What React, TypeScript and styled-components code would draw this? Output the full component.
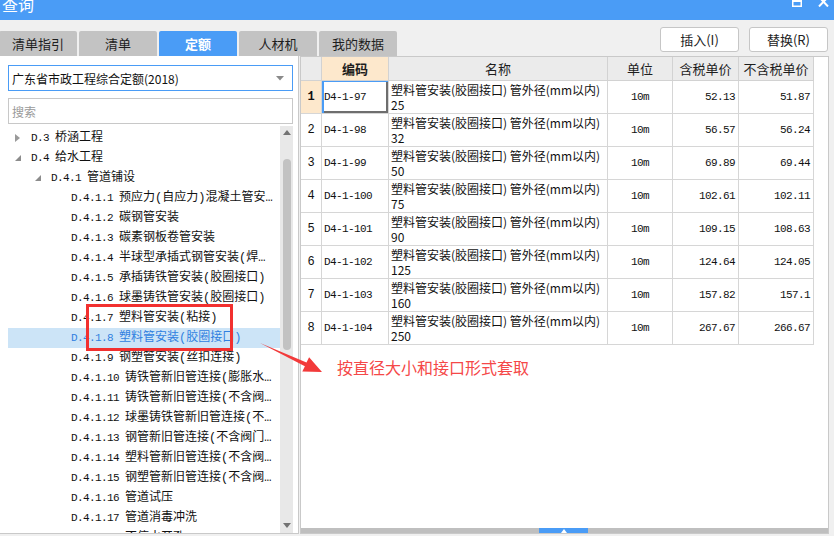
import styled, { createGlobalStyle } from 'styled-components';

const BLUE = '#4a9cf6';
const CJK = '"Noto Sans CJK SC", "Microsoft YaHei", sans-serif';
const MONO = '"Liberation Mono", "Noto Sans CJK SC", monospace';

interface TreeNode {
    code: string;
    name: string;
    level: number;
    toggle?: 'open' | 'closed';
    active?: boolean;
}

const treeNodes: TreeNode[] = [
    { code: 'D.3', name: '桥涵工程', level: 0, toggle: 'closed' },
    { code: 'D.4', name: '给水工程', level: 0, toggle: 'open' },
    { code: 'D.4.1', name: '管道铺设', level: 1, toggle: 'open' },
    { code: 'D.4.1.1', name: '预应力(自应力)混凝土管安装', level: 2 },
    { code: 'D.4.1.2', name: '碳钢管安装', level: 2 },
    { code: 'D.4.1.3', name: '碳素钢板卷管安装', level: 2 },
    { code: 'D.4.1.4', name: '半球型承插式钢管安装(焊接)', level: 2 },
    { code: 'D.4.1.5', name: '承插铸铁管安装(胶圈接口)', level: 2 },
    { code: 'D.4.1.6', name: '球墨铸铁管安装(胶圈接口)', level: 2 },
    { code: 'D.4.1.7', name: '塑料管安装(粘接)', level: 2 },
    { code: 'D.4.1.8', name: '塑料管安装(胶圈接口)', level: 2, active: true },
    { code: 'D.4.1.9', name: '钢塑管安装(丝扣连接)', level: 2 },
    { code: 'D.4.1.10', name: '铸铁管新旧管连接(膨胀水泥接口)', level: 2 },
    { code: 'D.4.1.11', name: '铸铁管新旧管连接(不含阀门)', level: 2 },
    { code: 'D.4.1.12', name: '球墨铸铁管新旧管连接(不含阀门)', level: 2 },
    { code: 'D.4.1.13', name: '钢管新旧管连接(不含阀门安装)', level: 2 },
    { code: 'D.4.1.14', name: '塑料管新旧管连接(不含阀门)', level: 2 },
    { code: 'D.4.1.15', name: '钢塑管新旧管连接(不含阀门)', level: 2 },
    { code: 'D.4.1.16', name: '管道试压', level: 2 },
    { code: 'D.4.1.17', name: '管道消毒冲洗', level: 2 },
    { code: 'D.4.1.18', name: '不停水开孔', level: 2 },
];

interface QuotaRow {
    no: number;
    code: string;
    size: string;
    taxed: string;
    untaxed: string;
}

const quotaRows: QuotaRow[] = [
    { no: 1, code: 'D4-1-97', size: '25', taxed: '52.13', untaxed: '51.87' },
    { no: 2, code: 'D4-1-98', size: '32', taxed: '56.57', untaxed: '56.24' },
    { no: 3, code: 'D4-1-99', size: '50', taxed: '69.89', untaxed: '69.44' },
    { no: 4, code: 'D4-1-100', size: '75', taxed: '102.61', untaxed: '102.11' },
    { no: 5, code: 'D4-1-101', size: '90', taxed: '109.15', untaxed: '108.63' },
    { no: 6, code: 'D4-1-102', size: '125', taxed: '124.64', untaxed: '124.05' },
    { no: 7, code: 'D4-1-103', size: '160', taxed: '157.82', untaxed: '157.1' },
    { no: 8, code: 'D4-1-104', size: '250', taxed: '267.67', untaxed: '266.67' },
];

const tabs = ['清单指引', '清单', '定额', '人材机', '我的数据'];
const ACTIVE_TAB = '定额';

// 표 컬럼 너비 (오른쪽 테두리 포함)
const GRID_COLS = '21px 67px 219px 65px 66px 75px';

function App() {
    return (
        <Page>
            <GlobalStyle />
            <TitleBar>
                <Title>查询</Title>
                <WindowButtons>
                    <svg width="10" height="10" viewBox="0 0 10 10">
                        <rect x="0.75" y="0.75" width="8.5" height="8.5" fill="none" stroke="#fff" strokeWidth="1.5" />
                        <rect x="0" y="0" width="10" height="5" fill="#fff" />
                    </svg>
                    <svg width="11" height="10" viewBox="0 0 11 10">
                        <path d="M1 0 L10 9.5 M10 0 L1 9.5" stroke="#fff" strokeWidth="2" />
                    </svg>
                </WindowButtons>
            </TitleBar>

            <Toolbar>
                <Tabs>
                    {tabs.map((t) => (
                        <Tab key={t} $active={t === ACTIVE_TAB}>
                            {t}
                        </Tab>
                    ))}
                </Tabs>
                <Actions>
                    <ActionButton>插入(I)</ActionButton>
                    <ActionButton>替换(R)</ActionButton>
                </Actions>
            </Toolbar>

            <Body>
                <LeftPanel>
                    <Select>
                        <span>广东省市政工程综合定额(2018)</span>
                        <svg width="8" height="5" viewBox="0 0 8 5">
                            <path d="M0 0 L8 0 L4 4.5 Z" fill="#8a8a8a" />
                        </svg>
                    </Select>
                    <Search placeholder="搜索" />
                    <TreeWrap>
                        <TreeList>
                            {treeNodes.map((n) => (
                                <TreeRow key={n.code} $level={n.level} $active={n.active}>
                                    <Toggle>
                                        {n.toggle === 'closed' && (
                                            <svg width="5" height="8" viewBox="0 0 5 8">
                                                <path d="M0 0 L5 4 L0 8 Z" fill="#9a9a9a" />
                                            </svg>
                                        )}
                                        {n.toggle === 'open' && (
                                            <svg width="6" height="6" viewBox="0 0 6 6">
                                                <path d="M6 0 L6 6 L0 6 Z" fill="#8c8c8c" />
                                            </svg>
                                        )}
                                    </Toggle>
                                    <Label>
                                        <Code>{n.code}</Code>
                                        {n.name}
                                    </Label>
                                </TreeRow>
                            ))}
                        </TreeList>
                        <VScroll>
                            <ScrollArrow>
                                <svg width="8" height="5" viewBox="0 0 8 5">
                                    <path d="M0 5 L8 5 L4 0 Z" fill="#737373" />
                                </svg>
                            </ScrollArrow>
                            <Thumb />
                            <ScrollArrow>
                                <svg width="8" height="5" viewBox="0 0 8 5">
                                    <path d="M0 0 L8 0 L4 5 Z" fill="#737373" />
                                </svg>
                            </ScrollArrow>
                        </VScroll>
                    </TreeWrap>
                </LeftPanel>

                <RightPanel>
                    <TableArea>
                        <HeaderRow>
                            <HeaderCell />
                            <HeaderCell $selected>编码</HeaderCell>
                            <HeaderCell>名称</HeaderCell>
                            <HeaderCell>单位</HeaderCell>
                            <HeaderCell>含税单价</HeaderCell>
                            <HeaderCell>不含税单价</HeaderCell>
                        </HeaderRow>
                        {quotaRows.map((r) => (
                            <DataRow key={r.no}>
                                <NoCell $selected={r.no === 1}>{r.no}</NoCell>
                                <CodeCell $focused={r.no === 1}>{r.code}</CodeCell>
                                <NameCell>
                                    <span>塑料管安装(胶圈接口) 管外径(mm以内)</span>
                                    <span>{r.size}</span>
                                </NameCell>
                                <UnitCell>10m</UnitCell>
                                <PriceCell>{r.taxed}</PriceCell>
                                <PriceCell>{r.untaxed}</PriceCell>
                            </DataRow>
                        ))}
                    </TableArea>
                    <HScroll>
                        <HThumb>
                            <svg width="6" height="4" viewBox="0 0 6 4">
                                <path d="M0 4 L6 4 L3 0 Z" fill="#fff" />
                            </svg>
                        </HThumb>
                    </HScroll>
                </RightPanel>
            </Body>

            {/* 주석(빨간 박스 / 화살표 / 안내 문구) */}
            <MarkBox />
            <MarkArrow width="72" height="40" viewBox="0 0 72 40">
                <path d="M5 5 L51.5 24.6 L54.1 19.2 L67 34 L47.3 33.6 L49.9 28.2 Z" fill="#f23a3a" />
            </MarkArrow>
            <MarkNote>按直径大小和接口形式套取</MarkNote>
        </Page>
    );
}

const GlobalStyle = createGlobalStyle`
    * { box-sizing: border-box; }
    body {
        margin: 0;
        overflow: hidden;
        background: #f0f0f0;
        font-family: ${CJK};
    }
`;

const Page = styled.div`
    position: relative;
    width: 834px;
    height: 536px;
    display: flex;
    flex-direction: column;
    background: #f0f0f0;
    overflow: hidden;
    font-family: ${CJK};
    color: #111;
`;

const TitleBar = styled.div`
    height: 20px;
    flex: none;
    display: flex;
    justify-content: space-between;
    align-items: flex-start;
    padding: 0 5px 0 2px;
    background: ${BLUE};
    color: #fff;
    overflow: hidden;
`;

const Title = styled.span`
    font-size: 16px;
    line-height: 16px;
    margin-top: -4px;
`;

const WindowButtons = styled.div`
    display: flex;
    align-items: flex-start;
    gap: 16px;
    margin-top: -3px;
`;

const Toolbar = styled.div`
    height: 36px;
    flex: none;
    display: flex;
    justify-content: space-between;
`;

const Tabs = styled.div`
    display: flex;
    gap: 2px;
    align-self: flex-end;
    margin-left: -1px;
`;

const Tab = styled.div<{ $active?: boolean }>`
    width: 78px;
    height: 25px;
    display: flex;
    align-items: center;
    justify-content: center;
    border-radius: 2px 2px 0 0;
    background: ${({ $active }) => ($active ? BLUE : '#c3c3c3')};
    color: ${({ $active }) => ($active ? '#fff' : '#1e1e1e')};
    font-size: 13px;
    font-weight: ${({ $active }) => ($active ? 700 : 400)};
`;

const Actions = styled.div`
    display: flex;
    align-items: flex-start;
    gap: 10px;
    padding: 7px 6px 0 0;
`;

const ActionButton = styled.button`
    width: 79px;
    height: 25px;
    padding: 0;
    background: #fff;
    border: 1px solid #c6c6c6;
    border-radius: 3px;
    font-family: ${CJK};
    font-size: 13px;
    color: #222;
`;

const Body = styled.div`
    height: 478px;
    flex: none;
    display: flex;
    gap: 1px;
`;

const LeftPanel = styled.div`
    width: 299px;
    display: flex;
    flex-direction: column;
    background: #fff;
    border-right: 1px solid #c9c9c9;
    border-bottom: 1px solid #c9c9c9;
`;

const Select = styled.div`
    width: 285px;
    height: 26px;
    margin: 9px 0 0 8px;
    display: flex;
    align-items: center;
    justify-content: space-between;
    padding: 0 8px 0 3px;
    border: 1px solid ${BLUE};
    font-size: 12px;
    color: #111;
`;

const Search = styled.input`
    width: 285px;
    height: 26px;
    margin: 7px 0 0 8px;
    padding: 0 3px;
    border: 1px solid #c8c8c8;
    outline: none;
    font-family: ${CJK};
    font-size: 12px;

    &::placeholder {
        color: #9a9a9a;
    }
`;

const TreeWrap = styled.div`
    flex: 1;
    min-height: 0;
    display: flex;
    margin-top: 2px;
    padding-left: 8px;
    overflow: hidden;
`;

const TreeList = styled.div`
    width: 272px;
    padding-top: 2px;
    overflow: hidden;
`;

const TreeRow = styled.div<{ $level: number; $active?: boolean }>`
    height: 20px;
    display: flex;
    align-items: center;
    padding-left: ${({ $level }) => 7 + $level * 20}px;
    padding-right: 5px;
    background: ${({ $active }) => ($active ? '#cce4f7' : 'transparent')};
    color: ${({ $active }) => ($active ? '#2f7fe0' : '#111')};
`;

const Toggle = styled.span`
    width: 16px;
    flex: none;
    display: flex;
    align-items: center;
`;

// 괄호 등 반각 문자는 고정폭 글꼴로 (원본의 반각 폭에 맞춤)
const Label = styled.span`
    flex: 1;
    min-width: 0;
    overflow: hidden;
    white-space: nowrap;
    text-overflow: ellipsis;
    font-family: ${MONO};
    font-size: 12px;
    line-height: 20px;
`;

const Code = styled.span`
    font-size: 11px;
    letter-spacing: -0.6px;
    margin-right: 6px;
`;

const VScroll = styled.div`
    width: 13px;
    flex: none;
    display: flex;
    flex-direction: column;
    align-items: center;
    justify-content: space-between;
    background: #e8e8e8;
    padding-bottom: 2px;
`;

const ScrollArrow = styled.div`
    height: 12px;
    display: flex;
    align-items: center;
    justify-content: center;
`;

const Thumb = styled.div`
    width: 8px;
    height: 191px;
    margin-bottom: auto;
    margin-top: 21px;
    border-radius: 4px;
    background: #c2c2c2;
`;

const RightPanel = styled.div`
    width: 529px;
    display: flex;
    flex-direction: column;
    background: #fff;
    border: 1px solid #c9c9c9;
`;

const TableArea = styled.div`
    flex: 1;
    min-height: 0;
`;

const HeaderRow = styled.div`
    display: grid;
    grid-template-columns: ${GRID_COLS};
    height: 24px;
`;

const HeaderCell = styled.div<{ $selected?: boolean }>`
    display: flex;
    align-items: center;
    justify-content: center;
    border-right: 1px solid #d2d2d2;
    border-bottom: 1px solid #d2d2d2;
    background: ${({ $selected }) => ($selected ? '#fde8cc' : '#ebebeb')};
    font-size: 13px;
    font-weight: ${({ $selected }) => ($selected ? 700 : 400)};
    color: #1e1e1e;
`;

const DataRow = styled.div`
    display: grid;
    grid-template-columns: ${GRID_COLS};
    height: 33px;
`;

const Cell = styled.div`
    display: flex;
    align-items: center;
    border-right: 1px solid #d6d6d6;
    border-bottom: 1px solid #d6d6d6;
    font-size: 12px;
    color: #111;
`;

const NoCell = styled(Cell)<{ $selected?: boolean }>`
    justify-content: center;
    background: ${({ $selected }) => ($selected ? '#fde8cc' : '#fff')};
    font-family: ${MONO};
    font-size: 12px;
    font-weight: ${({ $selected }) => ($selected ? 700 : 400)};
`;

const CodeCell = styled(Cell)<{ $focused?: boolean }>`
    padding-left: 2px;
    font-family: ${MONO};
    font-size: 11px;
    letter-spacing: -0.6px;
    box-shadow: ${({ $focused }) =>
        $focused ? `inset 2px 1px 0 ${BLUE}, inset -2px -2px 0 #6e6e6e` : 'none'};
`;

const NameCell = styled(Cell)`
    flex-direction: column;
    align-items: flex-start;
    justify-content: center;
    padding-left: 2px;
    line-height: 15px;
    white-space: nowrap;
`;

const UnitCell = styled(Cell)`
    justify-content: center;
    font-family: ${MONO};
    font-size: 11px;
    letter-spacing: -0.6px;
`;

const PriceCell = styled(Cell)`
    justify-content: flex-end;
    padding-right: 3px;
    font-family: ${MONO};
    font-size: 11px;
    letter-spacing: -0.6px;
`;

const HScroll = styled.div`
    height: 5px;
    flex: none;
    background: #bfbfbf;
`;

const HThumb = styled.div`
    width: 49px;
    height: 5px;
    margin-left: 238px;
    display: flex;
    align-items: center;
    justify-content: center;
    background: ${BLUE};
`;

const MarkBox = styled.div`
    position: absolute;
    left: 86px;
    top: 304px;
    width: 147px;
    height: 47px;
    border: 3px solid #f2302f;
`;

const MarkArrow = styled.svg`
    position: absolute;
    left: 255px;
    top: 338px;
`;

const MarkNote = styled.div`
    position: absolute;
    left: 337px;
    top: 357px;
    font-size: 16px;
    line-height: 20px;
    color: #f54848;
`;

export default App;
